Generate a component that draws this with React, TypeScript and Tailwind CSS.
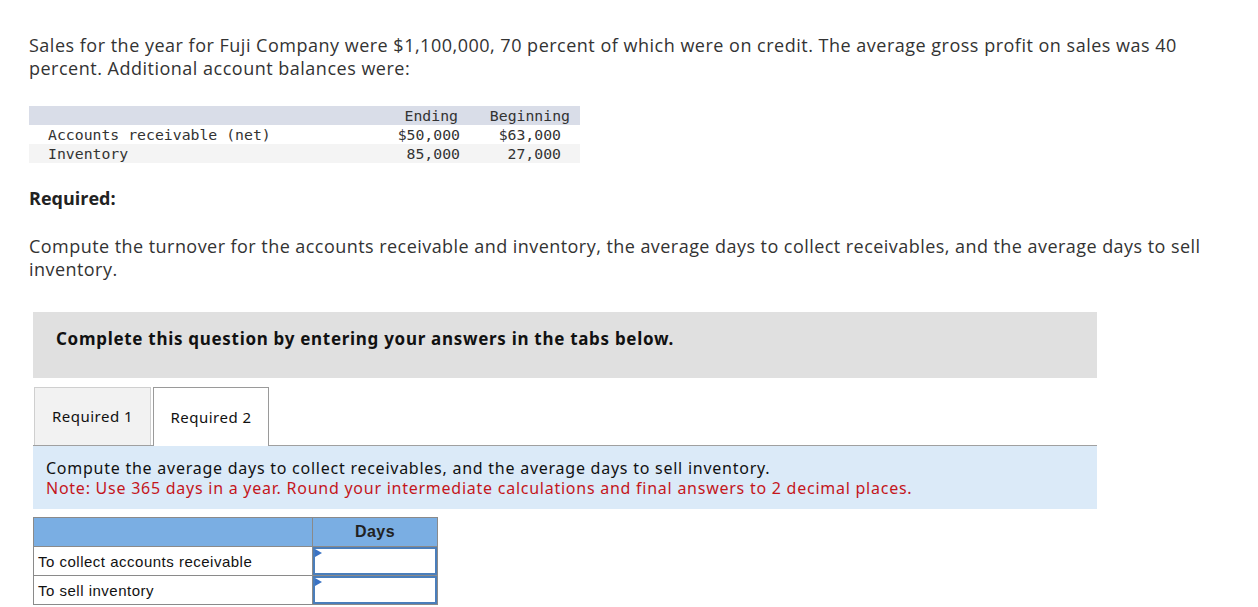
export default function App() {
  const sans = { fontFamily: '"Open Sans", Lato, sans-serif' }
  return (
    <div className="min-h-screen bg-white text-[#222]">
      <div className="pl-[29px] pr-[30px] pt-[34px] w-[1245px]">
        <p className="text-[18px] leading-[23px] text-[#333] tracking-[0.5px]" style={sans}>
          Sales for the year for Fuji Company were $1,100,000, 70 percent of which were on credit. The average gross profit on sales was 40 percent. Additional account balances were:
        </p>

        {/* balances table */}
        <table className="mt-[26px] w-[551px] border-collapse text-[14.8px] leading-[18px] text-[#333] font-['DejaVu_Sans_Mono',monospace]">
          <tbody>
            <tr className="bg-[#d9dde8] h-[19px]">
              <td></td>
              <td className="text-right pr-[4px] pt-[1px] w-[80px]">Ending</td>
              <td className="text-right pr-[10px] pt-[1px] w-[118px]">Beginning</td>
            </tr>
            <tr className="bg-white h-[19px]">
              <td className="pl-[19px]">Accounts receivable (net)</td>
              <td className="text-right pr-[2px]">$50,000</td>
              <td className="text-right pr-[19px]">$63,000</td>
            </tr>
            <tr className="bg-[#f4f4f4] h-[19px]">
              <td className="pl-[19px]">Inventory</td>
              <td className="text-right pr-[2px]">85,000</td>
              <td className="text-right pr-[19px]">27,000</td>
            </tr>
          </tbody>
        </table>

        <p className="mt-[24px] text-[18px] leading-[23px] font-bold text-[#222]" style={sans}>Required:</p>
        <p className="mt-[25px] text-[18px] leading-[23px] text-[#333] tracking-[0.45px]" style={sans}>
          Compute the turnover for the accounts receivable and inventory, the average days to collect receivables, and the average days to sell inventory.
        </p>
      </div>

      <div className="ml-[33px] w-[1064px]">
        <div className="mt-[31px] h-[66px] bg-[#e0e0e0] pl-[23px] pt-[15px]">
          <span className="text-[17px] leading-[23px] font-bold text-[#111] font-['Noto_Sans',sans-serif] tracking-[0.7px]">
            Complete this question by entering your answers in the tabs below.
          </span>
        </div>

        {/* tabs */}
        <div className="mt-[9px] flex items-end border-b border-[#a0a0a0]">
          <div className="ml-[1px] w-[117px] h-[58px] bg-[#f2f2f2] border border-b-0 border-[#cfcfcf] flex items-center justify-center text-[15px] tracking-[0.5px] text-[#111] font-['Noto_Sans',sans-serif]">
            Required 1
          </div>
          <div className="ml-[2px] w-[116px] h-[59px] -mb-px bg-white border border-b-0 border-[#9a9a9a] flex items-center justify-center text-[15px] tracking-[0.5px] text-[#111] font-['Noto_Sans',sans-serif]">
            Required 2
          </div>
        </div>

        <div className="h-[63px] bg-[#dbeaf8] pl-[13px] pt-[12px] text-[16px] leading-[20px] tracking-[0.75px] font-['Noto_Sans',sans-serif]">
          <p className="text-[#111]">Compute the average days to collect receivables, and the average days to sell inventory.</p>
          <p className="text-[#c4161c]">Note: Use 365 days in a year. Round your intermediate calculations and final answers to 2 decimal places.</p>
        </div>

        {/* answer table */}
        <table className="mt-[8px] border-collapse text-[15px] tracking-[0.5px] font-['Liberation_Sans',Arial,sans-serif] text-[#111]">
          <tbody>
            <tr className="h-[29px] bg-[#7aaee3]">
              <td className="w-[279px] border border-[#8a8a8a]"></td>
              <td className="w-[125px] border border-[#8a8a8a] text-center font-bold text-[16px] text-[#222]">Days</td>
            </tr>
            {['To collect accounts receivable', 'To sell inventory'].map(label => (
              <tr key={label} className="h-[29px]">
                <td className="border border-[#8a8a8a] pl-[4px] pt-[2px]">{label}</td>
                <td className="border border-[#8a8a8a] p-0">
                  <div className="relative h-[28px] border-2 border-[#4a7ebb] bg-white">
                    <svg className="absolute left-0 top-0" width="8" height="10" viewBox="0 0 8 10">
                      <polygon points="0,0 7,4 0,8" fill="#3b73c4" />
                    </svg>
                  </div>
                </td>
              </tr>
            ))}
          </tbody>
        </table>
      </div>
    </div>
  )
}
